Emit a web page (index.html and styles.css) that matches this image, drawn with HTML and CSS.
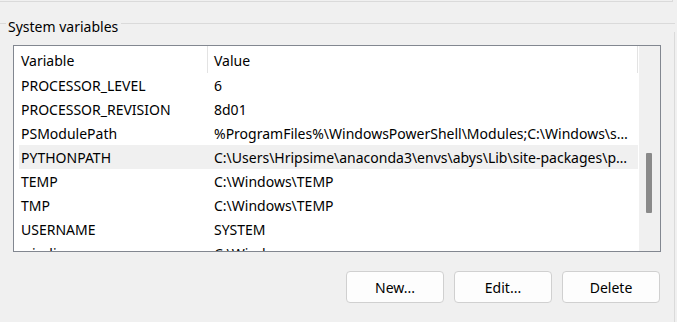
FILE: index.html
```html
<!DOCTYPE html>
<html>
<head>
<meta charset="utf-8">
<link rel="stylesheet" href="styles.css">
</head>
<body>
<div class="prev-group"></div>
<section class="group">
  <div class="group-head">
    <span class="gline gline-start"></span>
    <span class="group-title">System variables</span>
    <span class="gline gline-rest"></span>
  </div>
  <div class="group-body">
    <div class="listbox">
      <div class="list-content">
        <div class="list-header">
          <div class="hcell hcell-var">Variable</div>
          <div class="hcell hcell-val">Value</div>
        </div>
        <div class="row"><span class="c-var">PROCESSOR_LEVEL</span><span class="c-val">6</span></div>
        <div class="row"><span class="c-var">PROCESSOR_REVISION</span><span class="c-val">8d01</span></div>
        <div class="row"><span class="c-var">PSModulePath</span><span class="c-val">%ProgramFiles%\WindowsPowerShell\Modules;C:\Windows\s…</span></div>
        <div class="row row-hover"><span class="c-var">PYTHONPATH</span><span class="c-val">C:\Users\Hripsime\anaconda3\envs\abys\Lib\site-packages\p…</span></div>
        <div class="row"><span class="c-var">TEMP</span><span class="c-val">C:\Windows\TEMP</span></div>
        <div class="row"><span class="c-var">TMP</span><span class="c-val">C:\Windows\TEMP</span></div>
        <div class="row"><span class="c-var">USERNAME</span><span class="c-val">SYSTEM</span></div>
        <div class="row"><span class="c-var">windir</span><span class="c-val">C:\Windows</span></div>
      </div>
      <div class="scrollbar"><div class="thumb"></div></div>
    </div>
    <div class="buttons">
      <button class="btn">New...</button>
      <button class="btn">Edit...</button>
      <button class="btn">Delete</button>
    </div>
  </div>
</section>
</body>
</html>
```
FILE: styles.css
```css
html, body {
  margin: 0;
  padding: 0;
  background: #f0f0f0;
}
body {
  width: 677px;
  height: 322px;
  overflow: hidden;
  font-family: "Noto Sans", "Open Sans", sans-serif;
  font-size: 14px;
  color: #000;
}
.prev-group {
  width: 672px;
  height: 1px;
  border-bottom: 1px solid #dadada;
  border-right: 1px solid #dadada;
}
.group {
  margin-top: 13px;
}
.group-head {
  display: flex;
  align-items: center;
  height: 17px;
  width: 675px;
}
.gline {
  height: 1px;
  background: #dadada;
}
.gline-start {
  width: 6px;
}
.gline-rest {
  flex: 1;
}
.group-title {
  line-height: 17px;
  padding: 0 3px 0 2px;
  position: relative;
  top: 3px;
}
.group-body {
  width: 674px;
  border-right: 1px solid #dadada;
  padding-top: 13px;
  padding-bottom: 20px;
}
.listbox {
  margin-left: 13px;
  width: 646px;
  height: 205px;
  border: 1px solid #828790;
  background: #fff;
  display: flex;
  overflow: hidden;
}
.list-content {
  width: 625px;
  overflow: hidden;
}
.list-header {
  display: flex;
  height: 27px;
}
.hcell {
  box-sizing: border-box;
  height: 27px;
  line-height: 27px;
  padding-top: 1px;
  border-right: 1px solid #e3e3e3;
  white-space: nowrap;
}
.hcell-var {
  width: 194px;
  padding-left: 7px;
}
.hcell-val {
  width: 430px;
  padding-left: 6px;
}
.row {
  display: flex;
  height: 24px;
  line-height: 24px;
  margin-left: 5px;
  width: 619px;
  white-space: nowrap;
  padding-top: 1px;
  box-sizing: border-box;
}
.row-hover {
  background: #f0f0f0;
}
.c-var {
  width: 188px;
  padding-left: 2px;
  box-sizing: border-box;
  flex: none;
}
.c-val {
  padding-left: 7px;
  overflow: hidden;
}
.scrollbar {
  width: 21px;
  background: #f0f0f0;
  flex: none;
}
.thumb {
  margin-left: 7px;
  margin-top: 107px;
  width: 6px;
  height: 60px;
  background: #8a8a8a;
  border-radius: 1px;
}
.buttons {
  display: flex;
  justify-content: flex-end;
  gap: 10px;
  padding-right: 14px;
  margin-top: 19px;
}
.btn {
  width: 98px;
  height: 32px;
  box-sizing: border-box;
  background: #fdfdfd;
  border: 1px solid #d0d0d0;
  border-radius: 4px;
  font-family: "Noto Sans", "Open Sans", sans-serif;
  font-size: 14px;
  color: #000;
  padding: 0;
}
```
